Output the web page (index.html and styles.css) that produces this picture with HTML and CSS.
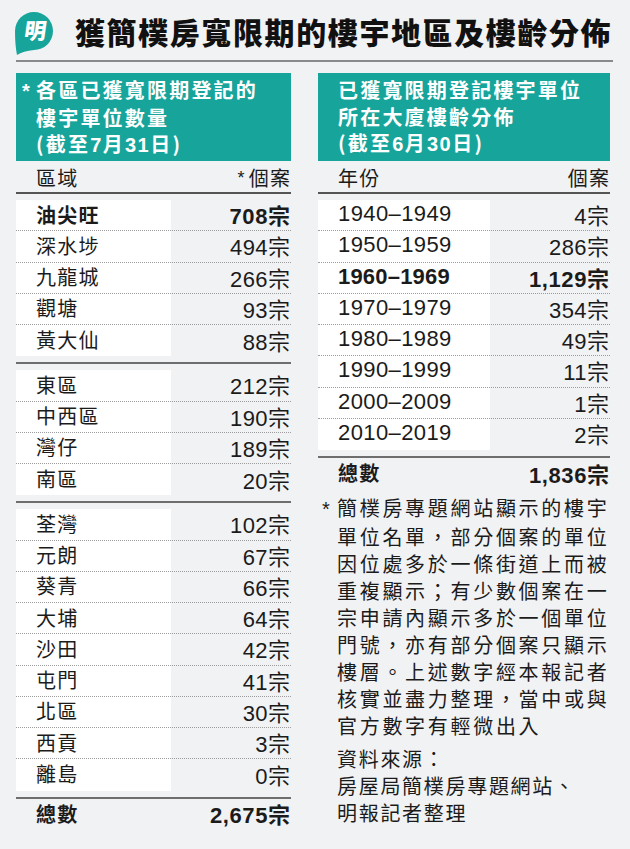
FILE: index.html
```html
<!DOCTYPE html>
<html lang="zh-Hant">
<head>
<meta charset="utf-8">
<title>獲簡樸房寬限期的樓宇地區及樓齡分佈</title>
<link rel="stylesheet" href="styles.css">
</head>
<body>
<div class="page">
  <header class="title-bar">
    <svg class="logo" viewBox="0 0 40 50" width="40" height="50" aria-hidden="true">
      <path d="M0,26 A19,19 0 1 1 19,45 Q8,46 2,50 Q0,40 0,26 Z" fill="#17a59b"/>
      <text x="19" y="34" text-anchor="middle" class="logo-text" transform="skewX(-8) translate(5,0)">明</text>
    </svg>
    <h1 class="title">獲簡樸房寬限期的樓宇地區及樓齡分佈</h1>
  </header>

  <div class="cols">
    <section class="col col-left">
      <div class="banner">
        <div class="bl"><span class="bstar">*</span>各區已獲寬限期登記的</div>
        <div class="bl">樓宇單位數量</div>
        <div class="bl">(截至<span class="num">7</span>月<span class="num">31</span>日)</div>
      </div>
      <div class="thead"><span>區域</span><span><span class="hstar">*</span>個案</span></div>

      <div class="group">
        <div class="row bold"><span class="name">油尖旺</span><span class="val">708宗</span></div>
        <div class="row"><span class="name">深水埗</span><span class="val">494宗</span></div>
        <div class="row"><span class="name">九龍城</span><span class="val">266宗</span></div>
        <div class="row"><span class="name">觀塘</span><span class="val">93宗</span></div>
        <div class="row"><span class="name">黃大仙</span><span class="val">88宗</span></div>
      </div>
      <div class="sep"></div>
      <div class="group">
        <div class="row"><span class="name">東區</span><span class="val">212宗</span></div>
        <div class="row"><span class="name">中西區</span><span class="val">190宗</span></div>
        <div class="row"><span class="name">灣仔</span><span class="val">189宗</span></div>
        <div class="row"><span class="name">南區</span><span class="val">20宗</span></div>
      </div>
      <div class="sep"></div>
      <div class="group">
        <div class="row"><span class="name">荃灣</span><span class="val">102宗</span></div>
        <div class="row"><span class="name">元朗</span><span class="val">67宗</span></div>
        <div class="row"><span class="name">葵青</span><span class="val">66宗</span></div>
        <div class="row"><span class="name">大埔</span><span class="val">64宗</span></div>
        <div class="row"><span class="name">沙田</span><span class="val">42宗</span></div>
        <div class="row"><span class="name">屯門</span><span class="val">41宗</span></div>
        <div class="row"><span class="name">北區</span><span class="val">30宗</span></div>
        <div class="row"><span class="name">西貢</span><span class="val">3宗</span></div>
        <div class="row"><span class="name">離島</span><span class="val">0宗</span></div>
      </div>
      <div class="sep"></div>
      <div class="row total bold"><span class="name">總數</span><span class="val">2,675宗</span></div>
    </section>

    <section class="col col-right">
      <div class="banner">
        <div class="bl">已獲寬限期登記樓宇單位</div>
        <div class="bl">所在大廈樓齡分佈</div>
        <div class="bl">(截至<span class="num">6</span>月<span class="num">30</span>日)</div>
      </div>
      <div class="thead"><span>年份</span><span>個案</span></div>

      <div class="group">
        <div class="row"><span class="year">1940–1949</span><span class="val">4宗</span></div>
        <div class="row"><span class="year">1950–1959</span><span class="val">286宗</span></div>
        <div class="row bold"><span class="year">1960–1969</span><span class="val">1,129宗</span></div>
        <div class="row"><span class="year">1970–1979</span><span class="val">354宗</span></div>
        <div class="row"><span class="year">1980–1989</span><span class="val">49宗</span></div>
        <div class="row"><span class="year">1990–1999</span><span class="val">11宗</span></div>
        <div class="row"><span class="year">2000–2009</span><span class="val">1宗</span></div>
        <div class="row"><span class="year">2010–2019</span><span class="val">2宗</span></div>
      </div>
      <div class="sep"></div>
      <div class="row total bold"><span class="name">總數</span><span class="val">1,836宗</span></div>

      <p class="note"><span class="nstar">*</span>簡樸房專題網站顯示的樓宇<br>單位名單，部分個案的單位<br>因位處多於一條街道上而被<br>重複顯示；有少數個案在一<br>宗申請內顯示多於一個單位<br>門號，亦有部分個案只顯示<br>樓層。上述數字經本報記者<br>核實並盡力整理，當中或與<br>官方數字有輕微出入</p>
      <p class="source">資料來源：<br>房屋局簡樸房專題網站、<br>明報記者整理</p>
    </section>
  </div>
</div>
</body>
</html>
```

FILE: styles.css
```css
* { box-sizing: border-box; }

body {
  margin: 0;
  background: #f1f2f4;
  color: #1b1b1b;
  font-family: "Liberation Sans", "Noto Sans CJK TC", sans-serif;
}

.page {
  width: 630px;
  height: 849px;
  padding: 0 17px 0 16px;
  overflow: hidden;
}

/* Title */
.title-bar {
  display: flex;
  align-items: center;
  height: 62px;
  border-bottom: 2px solid #8a8a8a;
}

.logo {
  flex: none;
  width: 40px;
  height: 50px;
  margin-left: -1px;
}

.logo-text {
  fill: #ffffff;
  font-family: "Noto Sans CJK TC", sans-serif;
  font-size: 22px;
  font-weight: 900;
}

.title {
  margin: 2px 0 0 20px;
  font-family: "Noto Sans CJK TC", sans-serif;
  font-size: 30px;
  font-weight: 900;
  letter-spacing: 1.6px;
  line-height: 1;
  color: #111;
  white-space: nowrap;
}

/* Columns */
.cols {
  display: flex;
  gap: 27px;
  margin-top: 11px;
}

.col-left { width: 275px; --white: 155px; }
.col-right { width: 292px; --white: 172px; }

.banner {
  height: 88px;
  padding: 4px 0 0 20px;
  background: #17a59b;
  color: #ffffff;
  font-family: "Noto Sans CJK TC", sans-serif;
  font-size: 20px;
  font-weight: 700;
  line-height: 26.5px;
  letter-spacing: 2.2px;
  white-space: nowrap;
}

.bstar {
  display: inline-block;
  width: 14px;
  margin-left: -14px;
  font-family: "Liberation Sans", sans-serif;
  letter-spacing: 0;
}

.num {
  font-family: "Liberation Sans", sans-serif;
  letter-spacing: 1.5px;
}

.thead {
  display: flex;
  justify-content: space-between;
  height: 33px;
  padding: 3px 1px 0 20px;
  border-bottom: 2px solid #555;
  font-family: "Noto Sans CJK TC", sans-serif;
  font-size: 20px;
  line-height: 28px;
  letter-spacing: 1.3px;
}

.thead > span:last-child { margin-right: -1.3px; }

.hstar {
  font-family: "Liberation Sans", sans-serif;
  font-size: 18px;
  margin-right: 3px;
  vertical-align: 2px;
}

/* Rows */
.group {
  margin-top: 6px;
  background: linear-gradient(to right, #ffffff var(--white), transparent var(--white));
}

.row {
  display: flex;
  justify-content: space-between;
  align-items: center;
  height: 31.25px;
  padding: 0 1px 2px 20px;
  border-bottom: 1px dotted #9c9c9c;
}

.row:last-child { border-bottom: none; }

.name {
  font-family: "Noto Sans CJK TC", sans-serif;
  font-size: 20px;
  letter-spacing: 1.3px;
}

.year {
  font-size: 22px;
  letter-spacing: 0.4px;
}

.val {
  font-size: 22px;
  letter-spacing: 0.4px;
  margin-right: -0.4px;
}

.bold .name,
.bold .year,
.bold .val { font-weight: 700; }

.bold .year { letter-spacing: 0.2px; }
.bold .val { letter-spacing: 0.6px; margin-right: -0.6px; }

.sep {
  height: 2px;
  margin-top: 6px;
  background: #6e6e6e;
}

.total {
  height: 31px;
  border-bottom: none;
}

/* Notes */
.note {
  margin: 5px 0 0;
  padding-left: 19px;
  font-family: "Noto Sans CJK TC", sans-serif;
  font-size: 20px;
  line-height: 27px;
  letter-spacing: 2.7px;
  white-space: nowrap;
}

.nstar {
  display: inline-block;
  width: 15px;
  margin-left: -15px;
  font-family: "Liberation Sans", sans-serif;
  letter-spacing: 0;
}

.source {
  margin: 6px 0 0;
  padding-left: 19px;
  font-family: "Noto Sans CJK TC", sans-serif;
  font-size: 20px;
  line-height: 27px;
  letter-spacing: 1.7px;
  white-space: nowrap;
}
```
